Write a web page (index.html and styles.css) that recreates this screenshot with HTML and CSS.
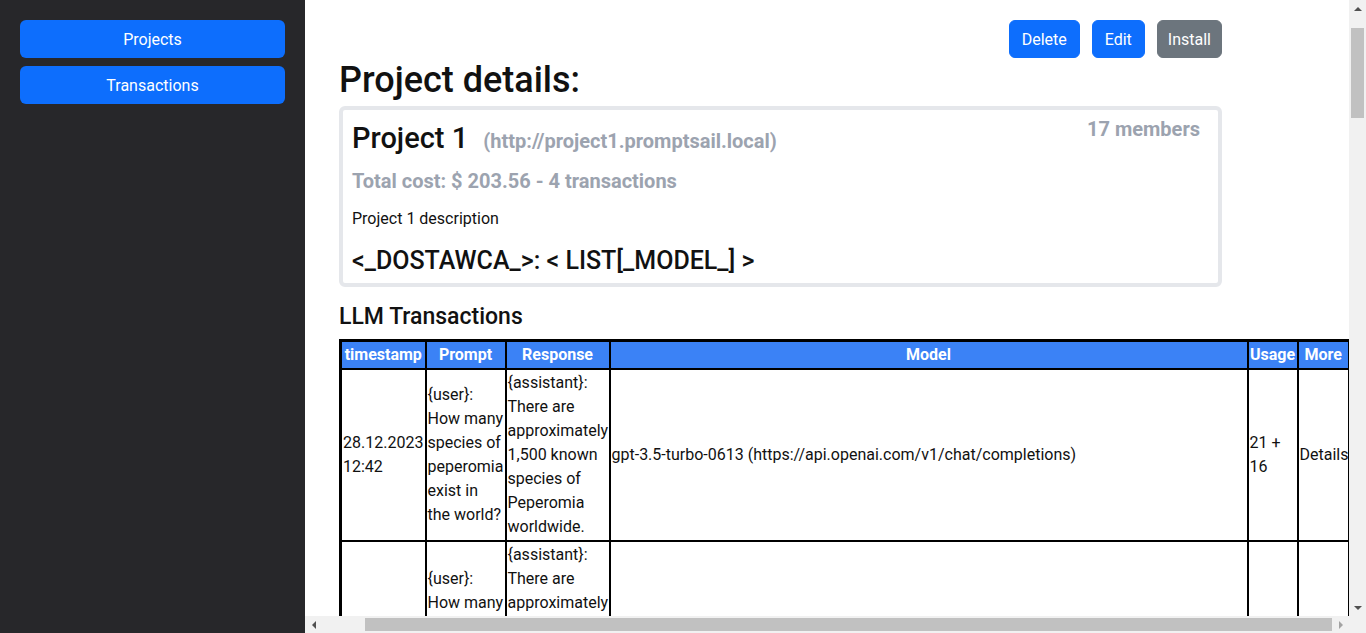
FILE: index.html
```html
<!DOCTYPE html>
<html lang="en">
<head>
<meta charset="utf-8">
<title>Project details</title>
<link rel="stylesheet" href="styles.css">
</head>
<body>
<div class="layout">
  <aside class="sidebar">
    <a class="side-btn" href="#">Projects</a>
    <a class="side-btn" href="#">Transactions</a>
  </aside>
  <div class="main">
    <main class="viewport">
      <div class="container">
        <div class="actions">
          <button class="btn btn-primary">Delete</button>
          <button class="btn btn-primary">Edit</button>
          <button class="btn btn-secondary">Install</button>
        </div>
        <h1 class="page-title">Project details:</h1>
        <section class="card">
          <div class="card-head">
            <h2 class="proj-name">Project 1 <small class="proj-url">(http://project1.promptsail.local)</small></h2>
            <span class="members">17 members</span>
          </div>
          <p class="cost">Total cost: $ 203.56 - 4 transactions</p>
          <p class="desc">Project 1 description</p>
          <h3 class="providers">&lt;_DOSTAWCA_&gt;: &lt; LIST[_MODEL_] &gt;</h3>
        </section>
        <h2 class="section-title">LLM Transactions</h2>
        <table class="tx">
          <colgroup>
            <col class="c-time"><col class="c-prompt"><col class="c-resp"><col class="c-model"><col class="c-usage"><col class="c-more">
          </colgroup>
          <thead>
            <tr><th>timestamp</th><th>Prompt</th><th>Response</th><th>Model</th><th>Usage</th><th>More</th></tr>
          </thead>
          <tbody>
            <tr><td>28.12.2023 12:42</td><td>{user}: How many species of peperomia exist in the world?</td><td>{assistant}: There are approximately 1,500 known species of Peperomia worldwide.</td><td>gpt-3.5-turbo-0613 (https://api.openai.com/v1/chat/completions)</td><td>21 + 16</td><td>Details</td></tr>
            <tr><td>28.12.2023 12:44</td><td>{user}: How many species of peperomia exist in the world?</td><td>{assistant}: There are approximately 1,500 known species of Peperomia worldwide. Most are</td><td>gpt-3.5-turbo-0613 (https://api.openai.com/v1/chat/completions)</td><td>21 + 21</td><td>Details</td></tr>
            <tr><td>28.12.2023 12:47</td><td>{user}: How many species of peperomia exist in the world?</td><td>{assistant}: There are approximately 1,500 known species of Peperomia worldwide.</td><td>gpt-3.5-turbo-0613 (https://api.openai.com/v1/chat/completions)</td><td>21 + 16</td><td>Details</td></tr>
            <tr><td>28.12.2023 12:51</td><td>{user}: How many species of peperomia exist in the world?</td><td>{assistant}: There are approximately 1,500 known species of Peperomia worldwide.</td><td>gpt-3.5-turbo-0613 (https://api.openai.com/v1/chat/completions)</td><td>21 + 16</td><td>Details</td></tr>
          </tbody>
        </table>
      </div>
    </main>
    <div class="vbar">
      <span class="sb-btn"><span class="arrow arrow-up"></span></span>
      <span class="vtrack"><span class="vthumb"></span></span>
      <span class="sb-btn"><span class="arrow arrow-down"></span></span>
    </div>
    <div class="hbar">
      <span class="sb-btn"><span class="arrow arrow-left"></span></span>
      <span class="htrack"><span class="hthumb"></span></span>
      <span class="sb-btn"><span class="arrow arrow-right"></span></span>
    </div>
    <div class="corner"></div>
  </div>
</div>
</body>
</html>
```

FILE: styles.css
```css
* { box-sizing: border-box; }
html, body { margin: 0; padding: 0; height: 100%; }
body {
  font-family: Roboto, "Noto Sans", sans-serif;
  font-size: 16px;
  line-height: 1.5;
  color: #111;
  background: #fff;
  overflow: hidden;
}
.layout { display: flex; height: 100vh; }
.sidebar {
  flex: 0 0 305px;
  background: #27272a;
  padding: 20px;
  display: flex;
  flex-direction: column;
  gap: 8px;
}
.side-btn {
  display: block;
  background: #0d6efd;
  color: #fff;
  text-decoration: none;
  text-align: center;
  border-radius: 6px;
  padding: 8px 12px 6px;
  line-height: 24px;
}

/* main area with its own scrollbars */
.main {
  flex: 1 1 auto;
  min-width: 0;
  display: grid;
  grid-template-columns: 1fr 17px;
  grid-template-rows: 1fr 17px;
  height: 100vh;
}
.viewport {
  overflow: hidden;
  padding: 20px 0 0 34px;
  min-width: 0;
}
.vbar, .hbar { display: flex; background: #f1f1f1; }
.vbar { flex-direction: column; }
.sb-btn {
  flex: 0 0 17px;
  width: 17px;
  height: 17px;
  display: flex;
  align-items: center;
  justify-content: center;
}
.vtrack { flex: 1; padding: 11px 2px 0; }
.vthumb { display: block; height: 90px; background: #c1c1c1; }
.htrack { flex: 1; padding: 2px 0 2px 43px; }
.hthumb { display: block; height: 13px; width: 967px; background: #c1c1c1; }
.corner { background: #f1f1f1; }
.arrow { width: 0; height: 0; }
.arrow-up { border-left: 4px solid transparent; border-right: 4px solid transparent; border-bottom: 4px solid #505050; }
.arrow-down { border-left: 4px solid transparent; border-right: 4px solid transparent; border-top: 4px solid #505050; }
.arrow-left { border-top: 4px solid transparent; border-bottom: 4px solid transparent; border-right: 4px solid #505050; }
.arrow-right { border-top: 4px solid transparent; border-bottom: 4px solid transparent; border-left: 4px solid #a3a3a3; }

.container { width: 883px; }
.actions { display: flex; justify-content: flex-end; gap: 12px; }
.btn {
  font-family: inherit;
  font-size: 16px;
  line-height: 24px;
  padding: 7px 12px 5px;
  border: 1px solid transparent;
  border-radius: 6px;
  color: #fff;
}
.btn-primary { background: #0d6efd; border-color: #0d6efd; }
.btn-secondary { background: #6c757d; border-color: #6c757d; padding-left: 10px; padding-right: 10px; }
.page-title {
  font-size: 36px;
  font-weight: 500;
  line-height: 1.2;
  margin: 1px 0 4px;
}
.card {
  border: 4px solid #e5e7eb;
  border-radius: 6px;
  padding: 7px 10px 7px 9px;
}
.card-head { display: flex; justify-content: space-between; align-items: flex-start; }
.proj-name {
  font-size: 29px;
  font-weight: 500;
  line-height: 1.2;
  margin: 4px 0 0;
}
.proj-url {
  font-size: 20px;
  font-weight: 700;
  color: #9ca3af;
  margin-left: 8px;
}
.members {
  font-size: 20px;
  font-weight: 700;
  color: #9ca3af;
  line-height: 24px;
  margin-right: 8px;
}
.cost {
  font-size: 20px;
  font-weight: 700;
  color: #9ca3af;
  line-height: 24px;
  margin: 13px 0 0;
}
.desc { margin: 14px 0 0; font-size: 16px; line-height: 24px; }
.providers {
  font-size: 25px;
  font-weight: 500;
  line-height: 1.2;
  margin: 15px 0 0;
}
.section-title {
  font-size: 23px;
  font-weight: 500;
  line-height: 1.2;
  margin: 16px 0 8px;
}
.tx {
  border-collapse: collapse;
  table-layout: fixed;
  width: 1009px;
  border: 3px solid #000;
}
.c-time { width: 85px; }
.c-prompt { width: 80px; }
.c-resp { width: 104px; }
.c-model { width: 638px; }
.c-usage { width: 50px; }
.c-more { width: 52px; }
.tx th, .tx td {
  border: 2px solid #000;
  padding: 1px;
  vertical-align: middle;
  line-height: 24px;
}
.tx th {
  background: #3b82f6;
  color: #fff;
  font-weight: 700;
  text-align: center;
}
.tx td { text-align: left; }
```
